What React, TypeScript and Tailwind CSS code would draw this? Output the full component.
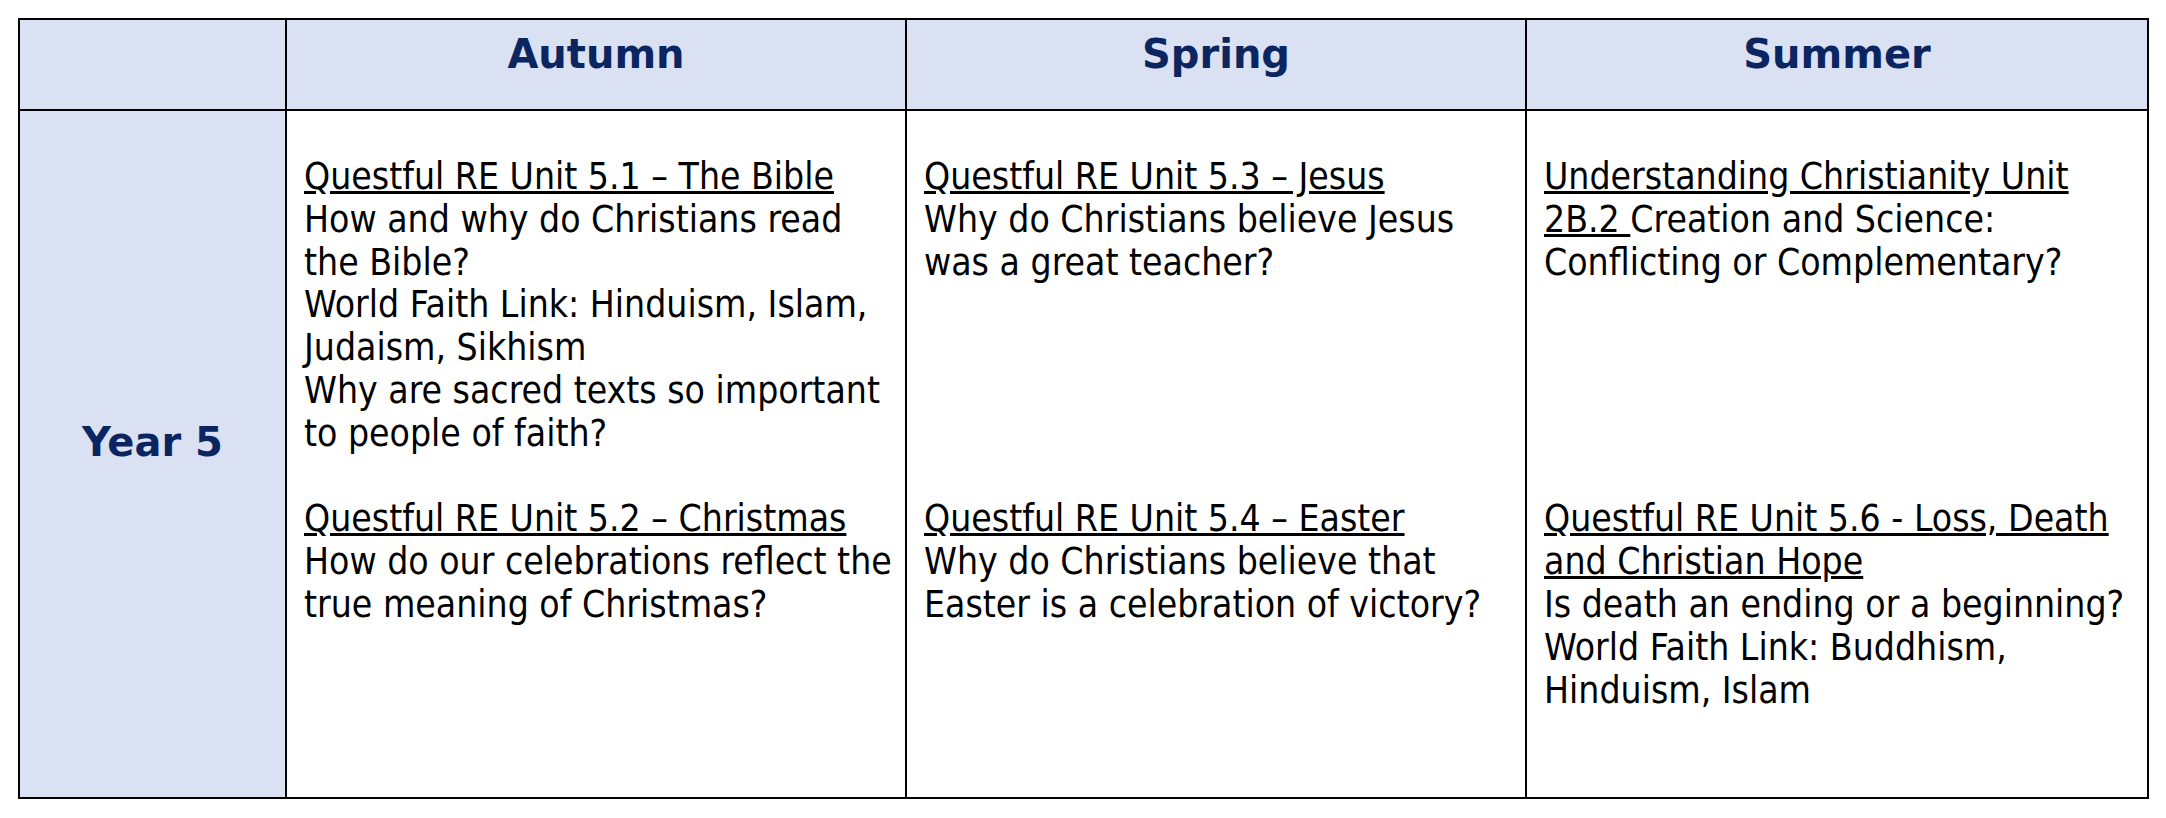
const body = "font-['DejaVu_Sans_Condensed','DejaVu_Sans',sans-serif] text-[37px] leading-[42.8px] text-black";
const head = "font-['DejaVu_Sans',sans-serif] font-bold text-[40px] leading-[42.8px] text-[#0a2560]";

type Line = { text: string; u?: boolean; pre?: string };

const autumn: Line[] = [
  { text: "Questful RE Unit 5.1 – The Bible", u: true },
  { text: "How and why do Christians read" },
  { text: "the Bible?" },
  { text: "World Faith Link: Hinduism, Islam," },
  { text: "Judaism, Sikhism" },
  { text: "Why are sacred texts so important" },
  { text: "to people of faith?" },
  { text: "" },
  { text: "Questful RE Unit 5.2 – Christmas", u: true },
  { text: "How do our celebrations reflect the" },
  { text: "true meaning of Christmas?" },
];

const spring: Line[] = [
  { text: "Questful RE Unit 5.3 – Jesus", u: true },
  { text: "Why do Christians believe Jesus" },
  { text: "was a great teacher?" },
  { text: "" },
  { text: "" },
  { text: "" },
  { text: "" },
  { text: "" },
  { text: "Questful RE Unit 5.4 – Easter", u: true },
  { text: "Why do Christians believe that" },
  { text: "Easter is a celebration of victory?" },
];

const summer: Line[] = [
  { text: "Understanding Christianity Unit", u: true },
  { pre: "2B.2 ", text: "Creation and Science:" },
  { text: "Conflicting or Complementary?" },
  { text: "" },
  { text: "" },
  { text: "" },
  { text: "" },
  { text: "" },
  { text: "Questful RE Unit 5.6 - Loss, Death", u: true },
  { text: "and Christian Hope", u: true },
  { text: "Is death an ending or a beginning?" },
  { text: "World Faith Link: Buddhism," },
  { text: "Hinduism, Islam" },
];

function Column({ lines }: { lines: Line[] }) {
  return (
    <div className={`border-l-2 border-black pl-[17px] pt-[45px] ${body}`}>
      {lines.map((l, i) =>
        l.text === "" && !l.pre ? (
          <div key={i} className="h-[42.8px]" />
        ) : (
          <div key={i} className="whitespace-pre">
            {l.pre && <span className="underline">{l.pre}</span>}
            <span className={l.u ? "underline" : ""}>{l.text}</span>
          </div>
        )
      )}
    </div>
  );
}

export default function App() {
  return (
    <div className="bg-white w-[2166px] h-[818px] pt-[18px] pl-[18px]">
      <div className="grid grid-cols-[265px_620px_620px_622px] grid-rows-[91px_686px] w-[2131px] border-2 border-black">
        <div className="bg-[#d9e1f2] border-b-2 border-black" />
        {["Autumn", "Spring", "Summer"].map((t) => (
          <div key={t} className={`bg-[#d9e1f2] border-b-2 border-l-2 border-black text-center pt-[13px] ${head}`}>
            {t}
          </div>
        ))}
        <div className={`bg-[#d9e1f2] flex items-center justify-center pb-[24px] ${head}`}>Year 5</div>
        <Column lines={autumn} />
        <Column lines={spring} />
        <Column lines={summer} />
      </div>
    </div>
  );
}
